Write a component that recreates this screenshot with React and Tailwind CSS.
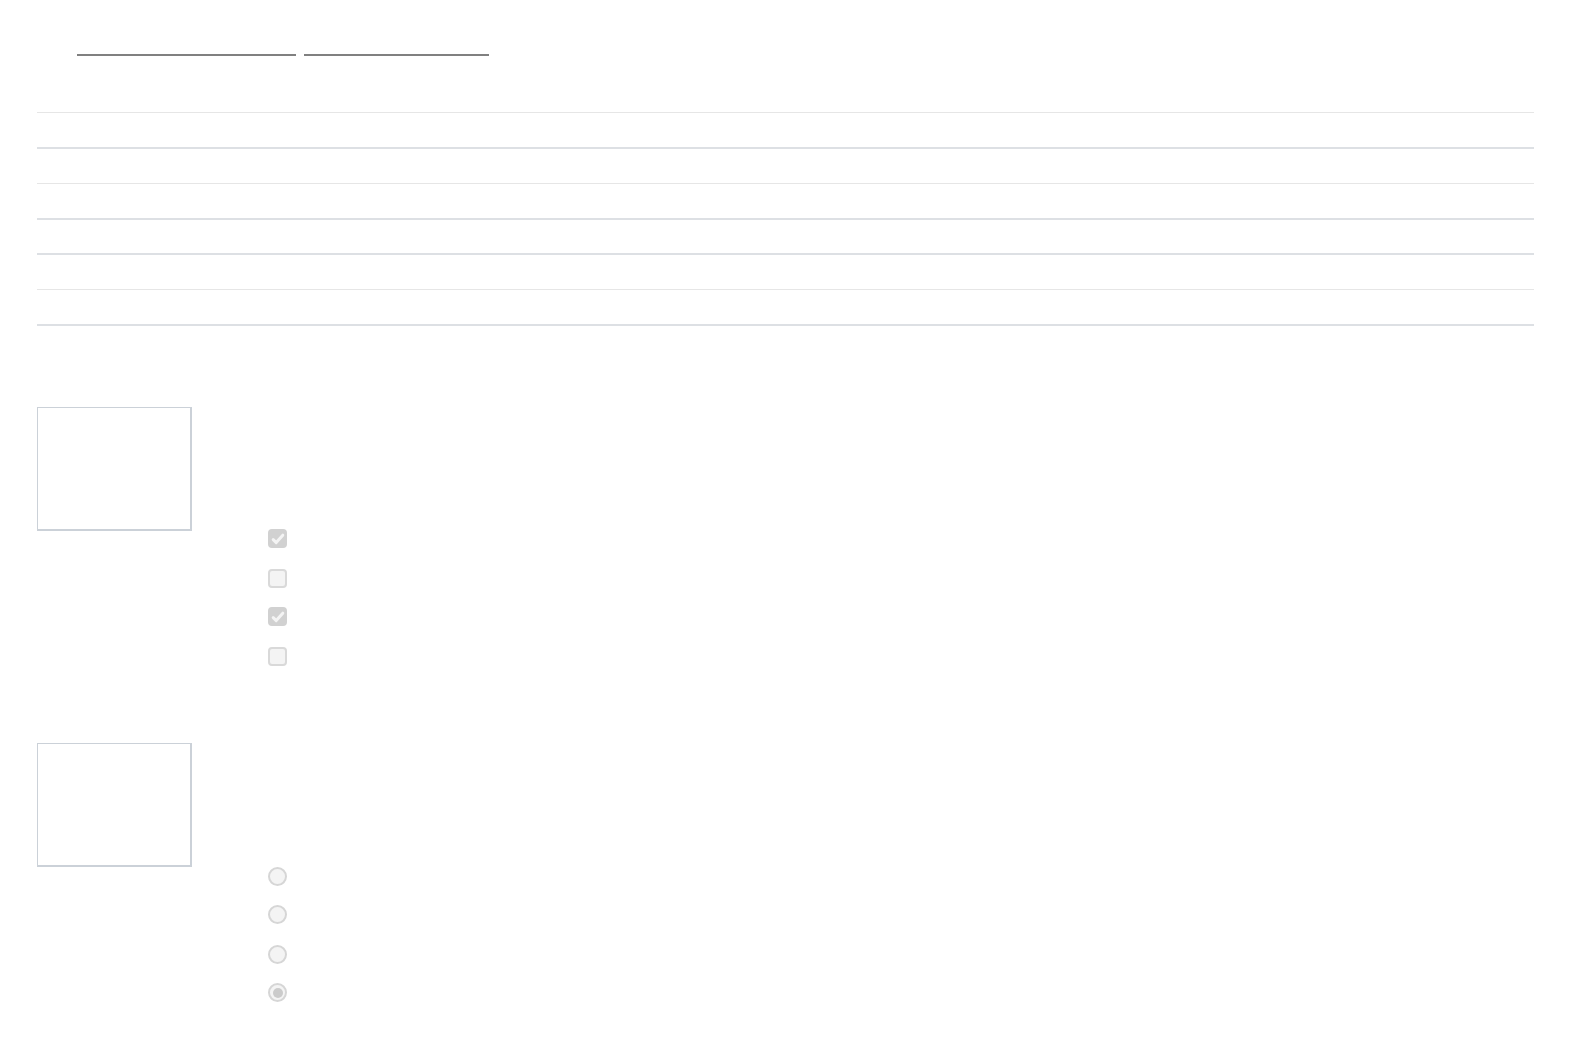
import React from "react";

// row heights include the bottom border
const rows = [
  { h: "h-[36px] border-b-2 border-[#dde0e4]" },
  { h: "h-[35px] border-b border-[#e6e6e6]" },
  { h: "h-[36px] border-b-2 border-[#dde0e4]" },
  { h: "h-[35px] border-b-2 border-[#dde0e4]" },
  { h: "h-[35px] border-b border-[#e6e6e6]" },
  { h: "h-[36px] border-b-2 border-[#dde0e4]" },
];

const Checkbox = ({ checked }) =>
  checked ? (
    <span className="flex h-[19px] w-[19px] items-center justify-center rounded-[4px] bg-[#d1d1d1]">
      <svg viewBox="0 0 16 16" className="h-[16px] w-[16px]">
        <path d="M3.2 8.6l3 3 6.6-7.4" fill="none" stroke="#f4f4f4" strokeWidth="3" strokeLinecap="round" strokeLinejoin="round" />
      </svg>
    </span>
  ) : (
    <span className="block h-[19px] w-[19px] rounded-[4px] border-2 border-[#d9d9d9] bg-[#f4f4f4]" />
  );

const Radio = ({ checked }) => (
  <span className="flex h-[19px] w-[19px] items-center justify-center rounded-full border-2 border-[#d6d6d6] bg-[#f4f4f4]">
    {checked && <span className="block h-[10px] w-[10px] rounded-full bg-[#cbcbcb]" />}
  </span>
);

const Frame = () => (
  <div className="h-[124px] w-[155px] border border-r-2 border-b-2 border-[#cbd1d8] bg-white" />
);

export default function App() {
  return (
    <div className="min-h-[1063px] bg-white pl-[37px] pr-[35px] font-['Liberation_Sans',sans-serif]">
      {/* link underlines */}
      <div className="flex gap-[8px] pl-[40px] pt-[54px]">
        <span className="block h-[2px] w-[219px] bg-[#808080]" />
        <span className="block h-[2px] w-[185px] bg-[#808080]" />
      </div>

      {/* table rows */}
      <div className="mt-[56px] border-t border-[#e6e6e6]">
        {rows.map((r, i) => (
          <div key={i} className={r.h} />
        ))}
      </div>

      {/* checkbox group */}
      <div className="mt-[81px]">
        <Frame />
        <div className="ml-[231px] -mt-[2px] flex flex-col">
          <Checkbox checked />
          <div className="mt-[21px]"><Checkbox /></div>
          <div className="mt-[19px]"><Checkbox checked /></div>
          <div className="mt-[21px]"><Checkbox /></div>
        </div>
      </div>

      {/* radio group */}
      <div className="mt-[77px]">
        <Frame />
        <div className="ml-[231px] flex flex-col">
          <Radio />
          <div className="mt-[19px]"><Radio /></div>
          <div className="mt-[21px]"><Radio /></div>
          <div className="mt-[19px]"><Radio checked /></div>
        </div>
      </div>
    </div>
  );
}
